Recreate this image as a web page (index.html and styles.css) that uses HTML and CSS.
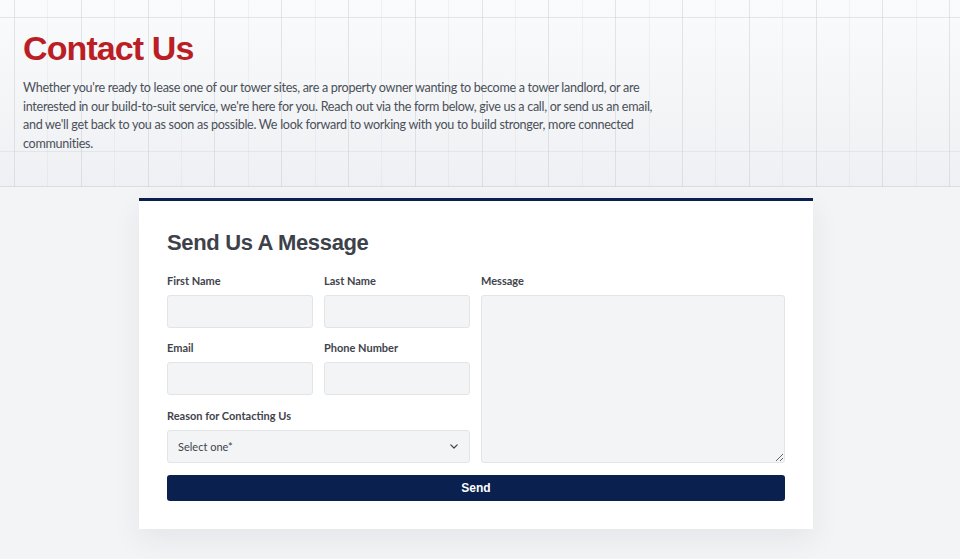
FILE: index.html
```html
<!DOCTYPE html>
<html lang="en">
<head>
<meta charset="utf-8">
<title>Contact Us</title>
<link rel="stylesheet" href="styles.css">
</head>
<body>
<header class="hero">
  <h1 class="hero-title">Contact Us</h1>
  <p class="hero-text">Whether you're ready to lease one of our tower sites, are a property owner wanting to become a tower landlord, or are interested in our build-to-suit service, we're here for you. Reach out via the form below, give us a call, or send us an email, and we'll get back to you as soon as possible. We look forward to working with you to build stronger, more connected communities.</p>
</header>
<main class="card">
  <h2 class="card-title">Send Us A Message</h2>
  <form class="form">
    <div class="form-cols">
      <div class="left">
        <div class="field">
          <label class="label">First Name</label>
          <input class="input" type="text">
        </div>
        <div class="field">
          <label class="label">Last Name</label>
          <input class="input" type="text">
        </div>
        <div class="field">
          <label class="label">Email</label>
          <input class="input" type="email">
        </div>
        <div class="field">
          <label class="label">Phone Number</label>
          <input class="input" type="tel">
        </div>
        <div class="field wide">
          <label class="label">Reason for Contacting Us</label>
          <div class="select">
            <span class="select-text">Select one*</span>
            <svg class="chev" width="8" height="5" viewBox="0 0 8 5"><path d="M0.8 0.8l3.2 3.2 3.2-3.2" fill="none" stroke="#3f444c" stroke-width="1.2" stroke-linecap="round" stroke-linejoin="round"/></svg>
          </div>
        </div>
      </div>
      <div class="right">
        <label class="label">Message</label>
        <textarea class="textarea"></textarea>
      </div>
    </div>
    <button class="send" type="button">Send</button>
  </form>
</main>
</body>
</html>
```
FILE: styles.css
```css
html, body {
  margin: 0;
  padding: 0;
}
body {
  background: #f3f4f6;
  width: 960px;
  height: 559px;
  overflow: hidden;
  font-family: "Lato", "Liberation Sans", sans-serif;
}
.hero {
  height: 187px;
  box-sizing: border-box;
  padding: 28px 23px 0;
  background-color: #f1f3f5;
  background-image:
    repeating-linear-gradient(90deg, transparent 0, transparent 14px, rgba(200,205,212,0.5) 14px, rgba(200,205,212,0.5) 15px, transparent 15px, transparent 66.8px),
    repeating-linear-gradient(90deg, transparent 0, transparent 47.4px, rgba(205,210,216,0.25) 47.4px, rgba(205,210,216,0.25) 48.4px, transparent 48.4px, transparent 66.8px),
    linear-gradient(180deg, transparent 0, transparent 17px, rgba(205,210,216,0.5) 17px, rgba(205,210,216,0.5) 18px, transparent 18px, transparent 151px, rgba(205,210,216,0.4) 151px, rgba(205,210,216,0.4) 152px, transparent 152px, transparent 186px, rgba(205,210,216,0.6) 186px),
    linear-gradient(180deg, #fafbfc 0%, #eef0f3 100%);
}
.hero-title {
  margin: 0;
  font-family: "Liberation Sans", Arial, sans-serif;
  font-weight: 700;
  font-size: 34px;
  line-height: 40px;
  letter-spacing: -0.9px;
  color: #bb1f26;
}
.hero-text {
  margin: 11px 0 0;
  max-width: 640px;
  font-size: 12.6px;
  line-height: 18.6px;
  letter-spacing: -0.3px;
  color: #4b5058;
}
.card {
  display: block;
  width: 674px;
  box-sizing: border-box;
  margin: 11px 0 0 139px;
  background: #fff;
  border-top: 3px solid #0a2150;
  padding: 27px 28px 28px;
  box-shadow: 0 10px 28px rgba(30, 40, 60, 0.07);
}
.card-title {
  margin: 0 0 17px;
  font-family: "Liberation Sans", Arial, sans-serif;
  font-weight: 700;
  font-size: 22px;
  line-height: 29px;
  letter-spacing: -0.35px;
  color: #3d4149;
}
.form {
  margin: 0;
}
.form-cols {
  display: flex;
  gap: 11px;
}
.left {
  width: 303px;
  display: grid;
  grid-template-columns: 146px 146px;
  column-gap: 11px;
  row-gap: 13px;
}
.field {
  display: flex;
  flex-direction: column;
}
.field.wide {
  grid-column: 1 / 3;
  margin-top: 1px;
}
.right {
  flex: 1;
  display: flex;
  flex-direction: column;
}
.label {
  font-size: 11px;
  line-height: 14px;
  font-weight: 700;
  color: #3f444c;
  margin-bottom: 7px;
}
.input, .select, .textarea {
  box-sizing: border-box;
  height: 33px;
  background: #f3f4f6;
  border: 1px solid #e2e4e8;
  border-radius: 3px;
  margin: 0;
  padding: 0;
}
.select {
  display: flex;
  align-items: center;
  justify-content: space-between;
  padding: 0 11px 0 10px;
}
.select-text {
  font-size: 11px;
  color: #3f444c;
}
.chev {
  display: block;
}
.textarea {
  flex: 1;
  height: auto;
  resize: vertical;
}
.send {
  display: block;
  width: 100%;
  height: 26px;
  margin-top: 12px;
  background: #0a2150;
  color: #fff;
  border: 0;
  border-radius: 3px;
  font-family: "Liberation Sans", Arial, sans-serif;
  font-weight: 700;
  font-size: 12px;
}
```
